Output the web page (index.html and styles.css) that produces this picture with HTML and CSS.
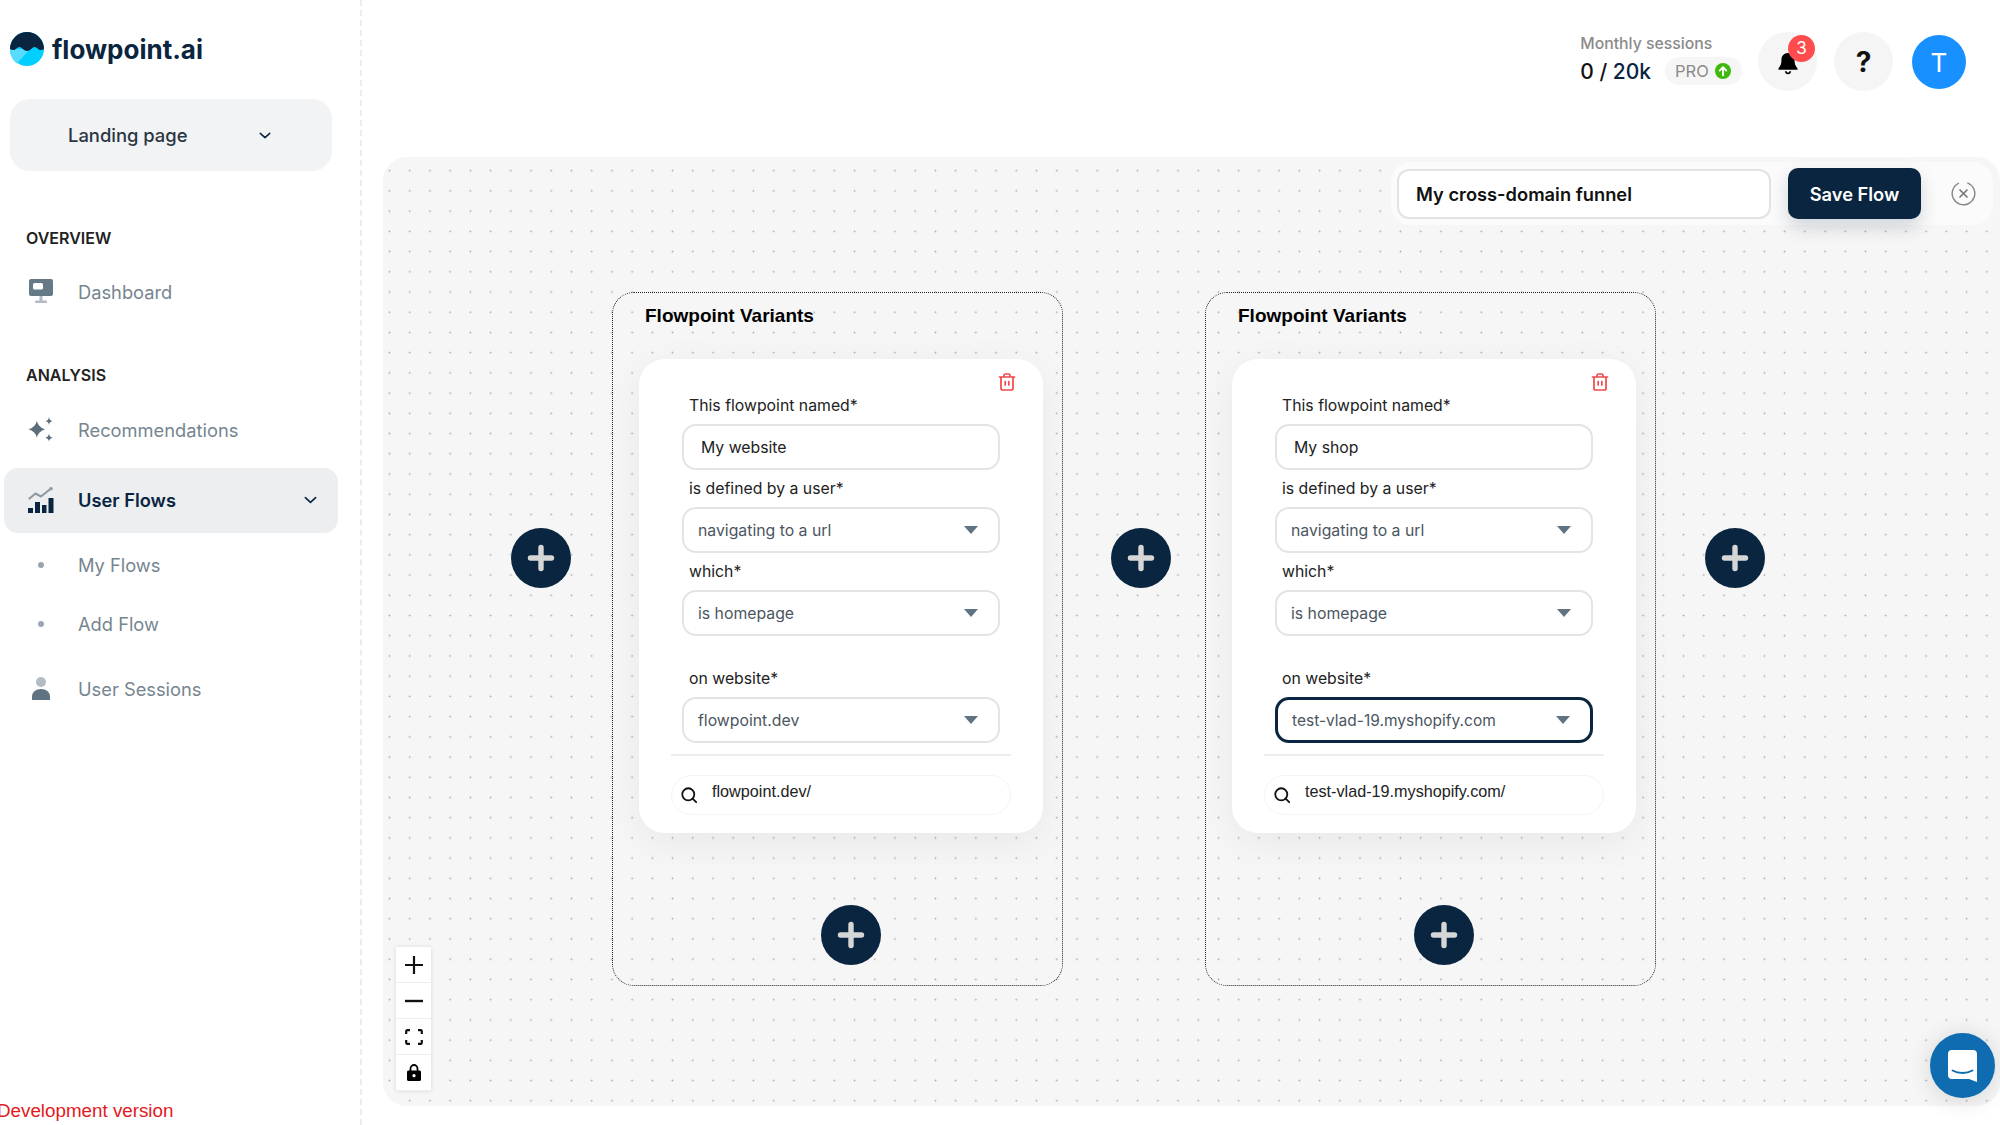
FILE: index.html
```html
<!DOCTYPE html>
<html lang="en">
<head>
    <meta charset="UTF-8">
    <title>flowpoint.ai - Add Flow</title>
    <link rel="stylesheet" href="styles.css">
</head>

<body>

<svg class="sprite" width="0" height="0">
    <symbol id="icon-plus" viewBox="0 0 28 28">
        <path d="M14 3.500v21M3.500 14h21" stroke="#d6d6d6" stroke-width="5.400" stroke-linecap="round" fill="none"/>
    </symbol>
    <symbol id="icon-trash" viewBox="0 0 20 20">
        <path d="M2.500 5h15M7 5V3.600C7 2.700 7.600 2 8.500 2h3c.9 0 1.500.7 1.500 1.600V5M4 5v11.200C4 17.200 4.800 18 5.800 18h8.400c1 0 1.800-.8 1.800-1.800V5M8.200 9.500v3.500M11.800 9.500v3.500" stroke="#f0484a" stroke-width="1.700" fill="none" stroke-linecap="round" stroke-linejoin="round"/>
    </symbol>
    <symbol id="icon-search" viewBox="0 0 20 20">
        <circle cx="9.200" cy="9.200" r="6.700" stroke="#111" stroke-width="2" fill="none"/>
        <path d="M14 14l4 4" stroke="#111" stroke-width="2" stroke-linecap="round"/>
    </symbol>
    <symbol id="icon-chevron" viewBox="0 0 14 8">
        <path d="M1.500 1.500L7 6.500l5.500-5" stroke="currentColor" stroke-width="1.800" fill="none" stroke-linecap="round" stroke-linejoin="round"/>
    </symbol>
</svg>

<div class="app">
    <aside class="sidebar">
        <div class="logo">
            <svg class="logo-mark" width="34" height="34" viewBox="0 0 34 34">
                <circle cx="17" cy="17" r="17" fill="#00cfff"/>
                <path d="M0 17h20L7 31.500A17 17 0 0 1 0 17z" fill="#55dcff"/>
                <path d="M0 17a17 17 0 0 1 34 0c-1.500 1-3.500 1.700-5.500 .2-1.800-1.400-3.800-3.200-5.800-1.400-2 1.700-3.700 3.200-5.700 3.200s-3.700-1.500-5.700-3.200c-2-1.800-4-.0-5.800 1.400C3.500 18.700 1.500 18 0 17z" fill="#0a2540"/>
            </svg>
            <span class="logo-text">flowpoint.ai</span>
        </div>

        <div class="project-select">
            <span>Landing page</span>
            <svg class="project-chevron" width="12" height="7"><use href="#icon-chevron"/></svg>
        </div>

        <div class="nav-title nav-title-first">OVERVIEW</div>
        <div class="nav-item nav-item-first">
            <span class="nav-icon">
                <svg width="26" height="25" viewBox="0 0 26 25">
                    <rect x="1" y="0" width="24" height="17" rx="2" fill="#667987"/>
                    <rect x="5" y="4" width="10" height="6.500" rx="1.500" fill="#fff"/>
                    <rect x="11.500" y="17" width="3" height="5" fill="#b3bcc4"/>
                    <rect x="7" y="21.500" width="12" height="2.500" rx="1" fill="#b3bcc4"/>
                </svg>
            </span>
            Dashboard
        </div>

        <div class="nav-title nav-title-second">ANALYSIS</div>
        <div class="nav-item nav-item-tight">
            <span class="nav-icon">
                <svg width="27" height="27" viewBox="0 0 27 27">
                    <path d="M9.200 4.600Q11 11.500 17.900 13.300 11 15 9.200 22 7.400 15 .5 13.300 7.400 11.500 9.200 4.600z" fill="#5c6d7b"/>
                    <path d="M21.800 .7c.4 2.400 1.600 3.600 4 4-2.400.4-3.600 1.600-4 4-.4-2.400-1.600-3.600-4-4 2.400-.4 3.600-1.600 4-4zM21.800 18c.4 2.400 1.600 3.600 4 4-2.400.4-3.600 1.600-4 4-.4-2.400-1.600-3.600-4-4 2.400-.4 3.600-1.600 4-4z" fill="#5c6d7b"/>
                </svg>
            </span>
            Recommendations
        </div>
        <div class="nav-item nav-item-active">
            <span class="nav-icon">
                <svg width="26" height="26" viewBox="0 0 26 26">
                    <path d="M1.500 11.500l6-5 5.500 3 10-8" stroke="#8e9aa5" stroke-width="2.200" fill="none" stroke-linecap="round" stroke-linejoin="round"/>
                    <circle cx="23" cy="1.800" r="1.800" fill="#8e9aa5"/>
                    <rect x="0" y="21" width="5" height="5" fill="#0a2540"/>
                    <rect x="7" y="15" width="5" height="11" fill="#0a2540"/>
                    <rect x="14" y="18" width="4.500" height="8" fill="#0a2540"/>
                    <rect x="20.500" y="11" width="5" height="15" fill="#0a2540"/>
                </svg>
            </span>
            User Flows
            <svg class="nav-chevron" width="13" height="8"><use href="#icon-chevron"/></svg>
        </div>
        <div class="nav-sub"><span class="nav-icon"><i class="nav-dot"></i></span>My Flows</div>
        <div class="nav-sub"><span class="nav-icon"><i class="nav-dot"></i></span>Add Flow</div>
        <div class="nav-item nav-item-last">
            <span class="nav-icon">
                <svg width="18" height="23" viewBox="0 0 18 23">
                    <circle cx="9" cy="5" r="5" fill="#b3bcc4"/>
                    <path d="M0 23v-3.500C0 15 4 12 9 12s9 3 9 7.500V23z" fill="#5f7382"/>
                </svg>
            </span>
            User Sessions
        </div>

        <div class="dev-note">Development version</div>
    </aside>

    <main class="main">
        <header class="topbar">
            <div class="sessions">
                <div class="sessions-label">Monthly sessions</div>
                <div class="sessions-row">
                    <span class="sessions-count"><span class="count-used">0 /</span> 20k</span>
                    <span class="pro-pill">PRO
                        <svg width="16" height="16" viewBox="0 0 16 16">
                            <circle cx="8" cy="8" r="8" fill="#3fb90f"/>
                            <path d="M8 12.300V4.500M4.700 7.600L8 4.200l3.300 3.400" stroke="#fff" stroke-width="1.900" fill="none" stroke-linecap="round" stroke-linejoin="round"/>
                        </svg>
                    </span>
                </div>
            </div>
            <div class="round-btn bell-btn">
                <svg class="bell-icon" width="20" height="23" viewBox="0 0 22 25">
                    <path d="M11 1c-4.500 0-7.200 3.200-7.200 7.500 0 5-1.300 7-3.300 9.500v1.500h21V18c-2-2.500-3.300-4.500-3.300-9.500C18.200 4.200 15.500 1 11 1z" fill="#000"/>
                    <path d="M7.500 21c.3 2 1.700 3.300 3.500 3.300s3.200-1.300 3.500-3.300h-2c-.2 1-.8 1.500-1.500 1.500s-1.300-.5-1.500-1.500z" fill="#000"/>
                </svg>
                <span class="badge">3</span>
            </div>
            <div class="round-btn help-btn">?</div>
            <div class="avatar">T</div>
        </header>

        <section class="canvas">
            <div class="add-btn node-add add-one"><svg width="28" height="28"><use href="#icon-plus"/></svg></div>
            <div class="add-btn node-add add-two"><svg width="28" height="28"><use href="#icon-plus"/></svg></div>
            <div class="add-btn node-add add-three"><svg width="28" height="28"><use href="#icon-plus"/></svg></div>

            <div class="variants variants-one">
                <h3 class="variants-title">Flowpoint Variants</h3>
                <div class="card">
                    <svg class="card-trash" width="20" height="20"><use href="#icon-trash"/></svg>
                    <div class="label">This flowpoint named*</div>
                    <div class="field field-input">My website</div>
                    <div class="label">is defined by a user*</div>
                    <div class="field field-select">navigating to a url<i class="caret"></i></div>
                    <div class="label">which*</div>
                    <div class="field field-select">is homepage<i class="caret"></i></div>
                    <div class="label label-gap">on website*</div>
                    <div class="field field-select">flowpoint.dev<i class="caret"></i></div>
                    <div class="divider"></div>
                    <div class="url-search">
                        <svg width="18" height="18"><use href="#icon-search"/></svg>
                        <span>flowpoint.dev/</span>
                    </div>
                </div>
                <div class="add-btn variants-add"><svg width="28" height="28"><use href="#icon-plus"/></svg></div>
            </div>

            <div class="variants variants-two">
                <h3 class="variants-title">Flowpoint Variants</h3>
                <div class="card">
                    <svg class="card-trash" width="20" height="20"><use href="#icon-trash"/></svg>
                    <div class="label">This flowpoint named*</div>
                    <div class="field field-input">My shop</div>
                    <div class="label">is defined by a user*</div>
                    <div class="field field-select">navigating to a url<i class="caret"></i></div>
                    <div class="label">which*</div>
                    <div class="field field-select">is homepage<i class="caret"></i></div>
                    <div class="label label-gap">on website*</div>
                    <div class="field field-select field-focus">test-vlad-19.myshopify.com<i class="caret"></i></div>
                    <div class="divider"></div>
                    <div class="url-search">
                        <svg width="18" height="18"><use href="#icon-search"/></svg>
                        <span>test-vlad-19.myshopify.com/</span>
                    </div>
                </div>
                <div class="add-btn variants-add"><svg width="28" height="28"><use href="#icon-plus"/></svg></div>
            </div>

            <div class="save-panel">
                <div class="flow-name">My cross-domain funnel</div>
                <button class="save-btn">Save Flow</button>
                <svg class="close-icon" width="25" height="25" viewBox="0 0 25 25">
                    <circle cx="12.500" cy="12.500" r="11.300" stroke="#8a8a8a" stroke-width="1.500" fill="none" stroke-dasharray="62 9" transform="rotate(-70 12.500 12.500)"/>
                    <path d="M9 9l7 7M16 9l-7 7" stroke="#777" stroke-width="1.700" stroke-linecap="round"/>
                </svg>
            </div>

            <div class="controls">
                <div class="control">
                    <svg width="20" height="20" viewBox="0 0 20 20"><path d="M10 1v18M1 10h18" stroke="#111" stroke-width="2.200"/></svg>
                </div>
                <div class="control">
                    <svg width="20" height="20" viewBox="0 0 20 20"><path d="M1 10h18" stroke="#111" stroke-width="2.400"/></svg>
                </div>
                <div class="control">
                    <svg width="18" height="16" viewBox="0 0 18 16"><path d="M1.200 5V2.300c0-.6.500-1.100 1.100-1.100H5M13 1.200h2.700c.6 0 1.100.5 1.100 1.100V5M16.800 11v2.700c0 .6-.5 1.100-1.100 1.100H13M5 14.800H2.300c-.6 0-1.100-.5-1.100-1.100V11" stroke="#111" stroke-width="2.200" fill="none"/></svg>
                </div>
                <div class="control">
                    <svg width="14" height="17" viewBox="0 0 14 17"><path d="M3.500 7V4.500a3.500 3.500 0 0 1 7 0V7" stroke="#000" stroke-width="1.800" fill="none"/><path d="M1.500 6.500h11c.8 0 1.500.7 1.500 1.500v7.500c0 .8-.7 1.500-1.500 1.500h-11C.7 17 0 16.300 0 15.500V8c0-.8.7-1.500 1.500-1.500z" fill="#000"/><circle cx="7" cy="11.700" r="1.600" fill="#fff"/></svg>
                </div>
            </div>
        </section>
    </main>
</div>

<div class="chat-btn">
    <svg width="29" height="32" viewBox="0 0 29 32">
        <path d="M3.500 0h22C27.400 0 29 1.600 29 3.500V32l-8-3H3.500C1.600 29 0 27.400 0 25.500v-22C0 1.600 1.600 0 3.500 0z" fill="#fff"/>
        <path d="M4.500 20.500c6 3.300 14 3.300 20 0" stroke="#0f6cb0" stroke-width="1.800" fill="none" stroke-linecap="round"/>
    </svg>
</div>

</body>
</html>
```

FILE: styles.css
```css
* {
    box-sizing: border-box;
}

html, body {
    margin: 0;
    height: 100%;
    overflow: hidden;
}

body {
    font-family: Inter, "Liberation Sans", sans-serif;
    background: white;
    color: #222;
}

.sprite {
    position: absolute;
}

.app {
    display: flex;
    height: 1125px;
}

/* sidebar */

.sidebar {
    width: 362px;
    flex-shrink: 0;
    display: flex;
    flex-direction: column;
    padding-top: 32px;
    border-right: 2px dashed #ececec;
}

.logo {
    display: flex;
    align-items: center;
    gap: 8px;
    height: 34px;
    padding-left: 10px;
}

.logo-text {
    font-size: 26px;
    font-weight: 700;
    color: #0a2540;
}

.project-select {
    display: flex;
    align-items: center;
    justify-content: space-between;
    width: 322px;
    height: 72px;
    margin: 33px 0 0 10px;
    padding: 0 61px 0 58px;
    background: #f2f3f5;
    border-radius: 20px;
    font-size: 18.400px;
    font-weight: 500;
    color: #2a3642;
}

.project-chevron {
    color: #0a2540;
}

.nav-title {
    height: 20px;
    padding-left: 26px;
    line-height: 20px;
    font-size: 16px;
    font-weight: 600;
    color: #222;
}

.nav-title-first {
    margin-top: 57px;
}

.nav-title-second {
    margin-top: 41px;
}

.nav-item, .nav-sub {
    display: flex;
    align-items: center;
    margin: 0 22px 0 4px;
    padding-left: 24px;
    font-size: 18.300px;
    color: #76858f;
}

.nav-item {
    height: 65px;
}

.nav-sub {
    height: 59px;
}

.nav-item-first {
    margin-top: 11px;
}

.nav-item-tight {
    margin-top: 12px;
    margin-bottom: 6px;
}

.nav-item-active {
    padding-bottom: 2px;
    background: #eceef0;
    border-radius: 14px;
    font-weight: 600;
    color: #0a2540;
    margin-bottom: 2px;
}

.nav-item-last {
    margin-top: 3px;
}

.nav-icon {
    display: flex;
    align-items: center;
    justify-content: center;
    width: 26px;
    margin-right: 24px;
}

.nav-dot {
    width: 6px;
    height: 6px;
    border-radius: 50%;
    background: #9aa6af;
}

.nav-chevron {
    margin-left: auto;
    margin-right: 21px;
    color: #0a2540;
}

.dev-note {
    margin: auto 0 3px -3px;
    line-height: 22px;
    font-family: "Liberation Sans", sans-serif;
    font-size: 18.800px;
    color: #e3191c;
}

/* top bar */

.main {
    flex: 1;
    display: flex;
    flex-direction: column;
    min-width: 0;
}

.topbar {
    display: flex;
    justify-content: flex-end;
    align-items: flex-start;
    height: 157px;
    padding: 32px 34px 0 0;
}

.sessions {
    margin-right: 16px;
    padding-top: 2px;
}

.sessions-label {
    line-height: 20px;
    font-size: 15.800px;
    font-weight: 500;
    color: #8a8a8a;
}

.sessions-row {
    display: flex;
    align-items: center;
    gap: 14px;
    margin-top: 3px;
}

.sessions-count {
    font-size: 21px;
    font-weight: 500;
    color: #0a2540;
}

.count-used {
    color: #111;
}

.pro-pill {
    display: flex;
    align-items: center;
    justify-content: space-between;
    width: 77px;
    height: 28px;
    padding: 0 11px 0 10px;
    border-radius: 14px;
    background: #f6f6f6;
    font-size: 16.500px;
    color: #8a8a8a;
}

.round-btn {
    position: relative;
    display: flex;
    align-items: center;
    justify-content: center;
    width: 59px;
    height: 59px;
    border-radius: 50%;
    background: #f5f5f5;
}

.bell-btn {
    margin-right: 17px;
}

.bell-icon {
    margin-top: 3px;
}

.badge {
    position: absolute;
    top: 3px;
    right: 2px;
    width: 27px;
    height: 27px;
    border-radius: 50%;
    background: #ff4d4f;
    color: white;
    font-size: 17px;
    line-height: 27px;
    text-align: center;
}

.help-btn {
    font-size: 28px;
    font-weight: 700;
    color: #111;
}

.avatar {
    display: flex;
    align-items: center;
    justify-content: center;
    width: 54px;
    height: 54px;
    margin: 3px 0 0 19px;
    border-radius: 50%;
    background: #1890ff;
    color: white;
    font-size: 26px;
}

/* flow canvas */

.canvas {
    position: relative;
    flex: 1;
    margin: 0 0 19px 21px;
    background-color: #f6f6f6;
    background-image: radial-gradient(circle, #b0b0b5 0.8px, transparent 1.100px);
    background-size: 20.230px 20.230px;
    background-position: -3.600px 3.600px;
    border-radius: 24px;
}

.add-btn {
    display: flex;
    align-items: center;
    justify-content: center;
    width: 60px;
    height: 60px;
    border-radius: 50%;
    background: #0a2540;
}

.node-add {
    position: absolute;
    top: 371px;
}

.add-one {
    left: 128px;
}

.add-two {
    left: 728px;
}

.add-three {
    left: 1322px;
}

.variants {
    position: absolute;
    top: 135px;
    width: 451px;
    height: 694px;
    padding: 0 0 0 26px;
    border: 1px dotted #222;
    border-radius: 22px;
}

.variants-one {
    left: 229px;
}

.variants-two {
    left: 822px;
}

.variants-title {
    margin: 0 0 0 6px;
    height: 66px;
    padding-top: 11px;
    line-height: 24px;
    font-family: "Liberation Sans", sans-serif;
    font-size: 19px;
    font-weight: 700;
    color: #000;
}

.card {
    position: relative;
    width: 404px;
    height: 474px;
    padding: 28px 43px 0;
    background: white;
    border-radius: 26px;
    box-shadow: 0 10px 40px rgba(0, 0, 0, 0.06);
}

.card-trash {
    position: absolute;
    top: 13px;
    right: 26px;
}

.label {
    height: 22px;
    margin-top: 7px;
    padding-left: 7px;
    line-height: 24px;
    font-size: 15.800px;
    color: #222;
}

.label-gap {
    margin-top: 31px;
}

.field {
    position: relative;
    display: flex;
    align-items: center;
    height: 46px;
    margin-top: 8px;
    border: 2px solid #e4e4e4;
    border-radius: 14px;
    background: white;
    font-size: 15.800px;
}

.field-input {
    padding-left: 17px;
    color: #222;
}

.field-select {
    padding-left: 14px;
    color: #4b5661;
}

.field-focus {
    border: 3px solid #0a2540;
    padding-left: 14px;
    font-size: 15.500px;
}

.caret {
    position: absolute;
    right: 20px;
    top: 50%;
    margin-top: -4px;
    border-left: 7px solid transparent;
    border-right: 7px solid transparent;
    border-top: 8px solid #5f7382;
}

.divider {
    height: 2px;
    margin: 11px -11px 0;
    background: #eeeeee;
}

.url-search {
    display: flex;
    align-items: flex-start;
    height: 40px;
    margin: 19px -11px 0;
    padding: 7px 0 0 8px;
    border: 1.500px solid #f4f4f4;
    border-radius: 20px;
    font-family: "Liberation Sans", sans-serif;
    font-size: 16.200px;
    color: #222;
}

.url-search svg {
    margin: 3px 14px 0 0;
}

.url-search span {
    margin-top: -2px;
    line-height: 20px;
}

.variants-add {
    margin: 72px 0 0 182px;
}

/* panel and controls on the canvas */

.save-panel {
    position: absolute;
    top: 5px;
    right: 7px;
    display: flex;
    align-items: center;
    width: 602px;
    height: 63px;
    padding-left: 6px;
    background: #fbfbfb;
    border-radius: 20px;
}

.flow-name {
    display: flex;
    align-items: center;
    width: 374px;
    height: 50px;
    padding-left: 17px;
    background: white;
    border: 2px solid #e3e3e3;
    border-radius: 12px;
    font-size: 18.300px;
    font-weight: 600;
    color: #111;
}

.save-btn {
    width: 133px;
    height: 51px;
    margin-left: 17px;
    border: none;
    border-radius: 10px;
    background: #0a2540;
    box-shadow: 0 8px 18px rgba(10, 37, 64, 0.18);
    color: white;
    font-family: inherit;
    font-size: 18.300px;
    font-weight: 600;
}

.close-icon {
    margin-left: 30px;
}

.controls {
    position: absolute;
    left: 13px;
    top: 790px;
    box-shadow: 0 0 4px rgba(0, 0, 0, 0.12);
}

.control {
    display: flex;
    align-items: center;
    justify-content: center;
    width: 35px;
    height: 36px;
    background: white;
    border-bottom: 1px solid #eee;
}

.chat-btn {
    position: absolute;
    left: 1930px;
    top: 1033px;
    display: flex;
    align-items: center;
    justify-content: center;
    width: 65px;
    height: 65px;
    border-radius: 50%;
    background: #0f6cb0;
    box-shadow: 0 2px 24px rgba(0, 0, 0, 0.14);
}
```
